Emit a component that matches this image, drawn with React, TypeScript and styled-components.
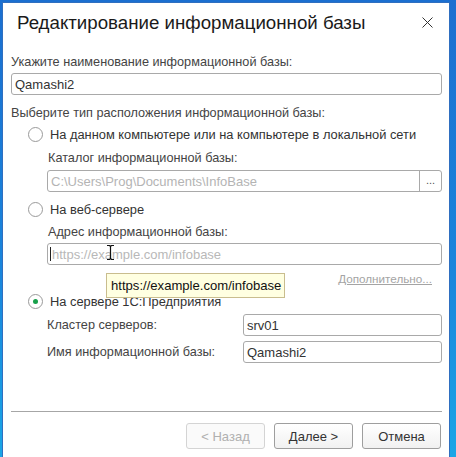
import React from "react"
import styled, { createGlobalStyle } from "styled-components"

const Global = createGlobalStyle`
  html, body {
    margin: 0;
    padding: 0;
  }
  body {
    width: 456px;
    height: 457px;
    overflow: hidden;
    background: linear-gradient(180deg, #1b6fd0 0%, #1a86dc 60%, #1aa6e6 100%);
    font-family: "Liberation Sans", Arial, sans-serif;
  }
`

const Window = styled.div`
  position: relative;
  box-sizing: border-box;
  margin: 2px 0 0 2px;
  width: 448px;
  height: 455px;
  background: #fff;
  border-left: 1px solid #2f6fc0;
  border-right: 1px solid #2f6fc0;
  border-top: 1px solid #2f6fc0;
  display: flex;
  flex-direction: column;
`

const TitleBar = styled.div`
  height: 39px;
  display: flex;
  align-items: center;
  justify-content: space-between;
  padding: 0 16px 0 14px;
`

const Title = styled.div`
  font-size: 18.7px;
  color: #1a1a1a;
`

const Body = styled.div`
  flex: 1;
  display: flex;
  flex-direction: column;
  padding: 0 7px 0 8px;
`

const Label = styled.div<{ $mt?: number; $indent?: number }>`
  margin-top: ${p => p.$mt ?? 0}px;
  margin-left: ${p => p.$indent ?? 0}px;
  font-size: 12.7px;
  line-height: 16px;
  height: 16px;
  color: #444;
  white-space: nowrap;
`

const Input = styled.div<{ $mt?: number; $indent?: number; $disabled?: boolean }>`
  position: relative;
  box-sizing: border-box;
  margin-top: ${p => p.$mt ?? 0}px;
  margin-left: ${p => p.$indent ?? 0}px;
  height: 22px;
  border: 1px solid #a9a9a9;
  border-radius: 3px;
  background: #fff;
  display: flex;
  align-items: center;
  font-size: 13px;
  color: ${p => (p.$disabled ? "#b4b4b4" : "#333")};
  overflow: hidden;
`

const InputText = styled.span`
  flex: 1;
  padding-left: 3px;
  white-space: nowrap;
`

const Placeholder = styled.span`
  color: #b8b8b8;
  white-space: nowrap;
`

const Caret = styled.span`
  display: inline-block;
  width: 1px;
  height: 14px;
  background: #222;
  margin: 0 1px 0 2px;
`

const PickButton = styled.div`
  width: 22px;
  height: 100%;
  border-left: 1px solid #a9a9a9;
  display: flex;
  align-items: center;
  justify-content: center;
  color: #555;
  font-size: 11px;
  padding-bottom: 2px;
  box-sizing: border-box;
`

const RadioRow = styled.div<{ $mt?: number }>`
  margin-top: ${p => p.$mt ?? 0}px;
  margin-left: 17px;
  height: 18px;
  display: flex;
  align-items: center;
  gap: 7px;
  font-size: 12.85px;
  color: #333;
  white-space: nowrap;
`

const RadioCircle = styled.span<{ $checked?: boolean }>`
  box-sizing: border-box;
  width: 15px;
  height: 15px;
  border-radius: 50%;
  border: 1px solid #9a9a9a;
  background: #fff;
  display: flex;
  align-items: center;
  justify-content: center;
  &::after {
    content: "";
    width: 5px;
    height: 5px;
    border-radius: 50%;
    background: ${p => (p.$checked ? "#17a04a" : "transparent")};
  }
`

const LinkRow = styled.div<{ $mt?: number }>`
  margin-top: ${p => p.$mt ?? 0}px;
  display: flex;
  justify-content: flex-end;
  padding-right: 10px;
  font-size: 11.7px;
  line-height: 16px;
  color: #a4a4a4;
  text-decoration: underline;
`

const FieldRow = styled.div<{ $mt?: number }>`
  margin-top: ${p => p.$mt ?? 0}px;
  margin-left: 36px;
  display: grid;
  grid-template-columns: 196px 1fr;
  align-items: center;
`

const Separator = styled.div`
  margin-top: auto;
  height: 1px;
  background: #a6a6a6;
`

const Buttons = styled.div`
  display: flex;
  justify-content: flex-end;
  gap: 9px;
  padding: 11px 1px 8px 0;
`

const Button = styled.div<{ $disabled?: boolean }>`
  box-sizing: border-box;
  width: 79px;
  height: 26px;
  border: 1px solid ${p => (p.$disabled ? "#d4d4d4" : "#9e9e9e")};
  border-radius: 3px;
  background: ${p => (p.$disabled ? "#fafafa" : "linear-gradient(#ffffff, #f1f1f1)")};
  color: ${p => (p.$disabled ? "#b0b0b0" : "#333")};
  font-size: 13px;
  display: flex;
  align-items: center;
  justify-content: center;
`

const Tooltip = styled.div`
  position: absolute;
  left: 103px;
  top: 270px;
  box-sizing: border-box;
  width: 179px;
  height: 25px;
  padding: 0 4px;
  background: #ffffe1;
  border: 1px solid #c9bd8e;
  font-size: 13.1px;
  color: #111;
  display: flex;
  align-items: center;
  white-space: nowrap;
`

const Cursor = styled.svg`
  position: absolute;
  left: 103px;
  top: 241px;
`

const CloseIcon = () => (
  <svg width="11" height="11" viewBox="0 0 11 11">
    <path d="M0.5 0.5 L10.5 10.5 M10.5 0.5 L0.5 10.5" stroke="#333" strokeWidth="1" />
  </svg>
)

const Radio = ({ checked, children, mt }: { checked?: boolean; children: React.ReactNode; mt?: number }) => (
  <RadioRow $mt={mt}>
    <RadioCircle $checked={checked} />
    <span>{children}</span>
  </RadioRow>
)

const App = () => {
  return (
    <>
      <Global />
      <Window>
        <TitleBar>
          <Title>Редактирование информационной базы</Title>
          <CloseIcon />
        </TitleBar>
        <Body>
          <Label $mt={12}>Укажите наименование информационной базы:</Label>
          <Input $mt={3}>
            <InputText>Qamashi2</InputText>
          </Input>
          <Label $mt={10}>Выберите тип расположения информационной базы:</Label>
          <Radio mt={4}>На данном компьютере или на компьютере в локальной сети</Radio>
          <Label $mt={7} $indent={37}>Каталог информационной базы:</Label>
          <Input $mt={4} $indent={36} $disabled>
            <InputText>C:\Users\Prog\Documents\InfoBase</InputText>
            <PickButton>...</PickButton>
          </Input>
          <Radio mt={8}>На веб-сервере</Radio>
          <Label $mt={6} $indent={37}>Адрес информационной базы:</Label>
          <Input $mt={3} $indent={36}>
            <Caret />
            <Placeholder>https://example.com/infobase</Placeholder>
          </Input>
          <LinkRow $mt={6}>Дополнительно...</LinkRow>
          <Radio mt={5} checked>На сервере 1С:Предприятия</Radio>
          <FieldRow $mt={4}>
            <Label>Кластер серверов:</Label>
            <Input>
              <InputText>srv01</InputText>
            </Input>
          </FieldRow>
          <FieldRow $mt={5}>
            <Label>Имя информационной базы:</Label>
            <Input>
              <InputText>Qamashi2</InputText>
            </Input>
          </FieldRow>
          <Separator />
          <Buttons>
            <Button $disabled>&lt; Назад</Button>
            <Button>Далее &gt;</Button>
            <Button>Отмена</Button>
          </Buttons>
        </Body>
        <Tooltip>https://example.com/infobase</Tooltip>
        <Cursor width="9" height="17" viewBox="0 0 9 17">
          <path d="M1 1.5 H3.5 L4.5 2.5 L5.5 1.5 H8 M4.5 2.5 V14.5 M1 15.5 H3.5 L4.5 14.5 L5.5 15.5 H8" stroke="#111" strokeWidth="1.2" fill="none" />
        </Cursor>
      </Window>
    </>
  )
}

export default App
